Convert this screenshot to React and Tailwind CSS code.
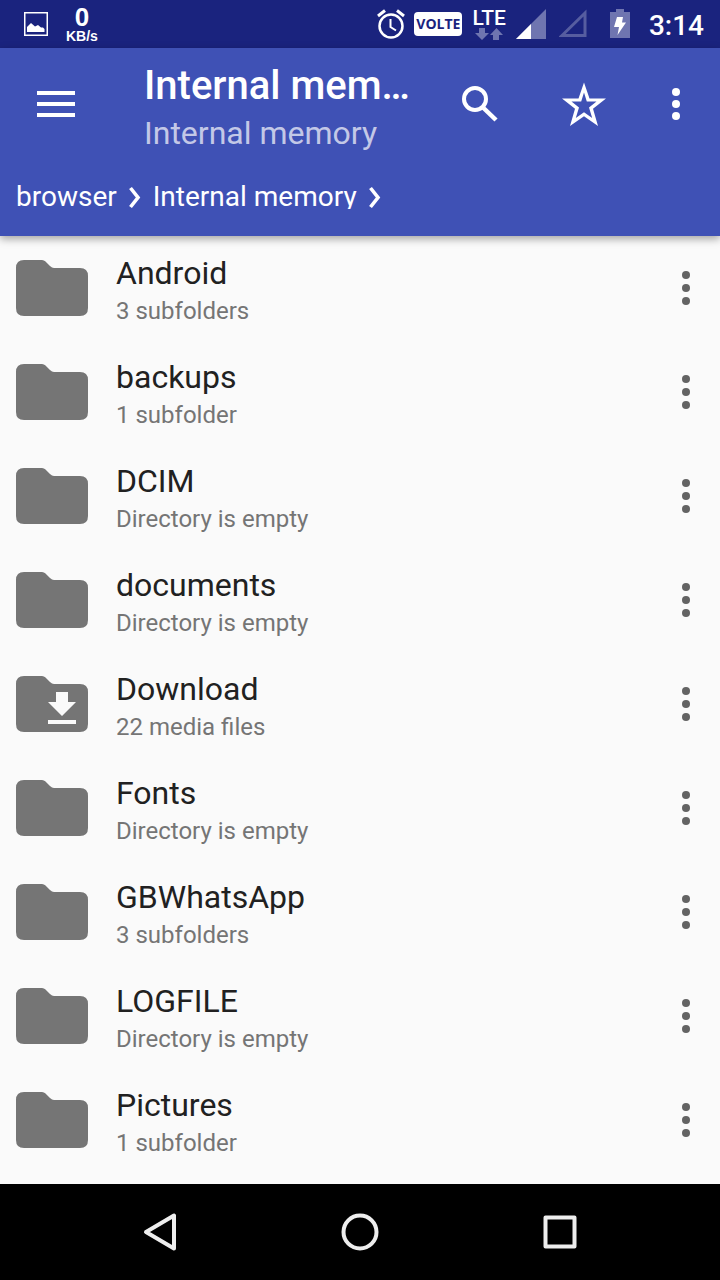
import React from 'react';

const folders = [
  { name: 'Android', info: '3 subfolders' },
  { name: 'backups', info: '1 subfolder' },
  { name: 'DCIM', info: 'Directory is empty' },
  { name: 'documents', info: 'Directory is empty' },
  { name: 'Download', info: '22 media files', download: true },
  { name: 'Fonts', info: 'Directory is empty' },
  { name: 'GBWhatsApp', info: '3 subfolders' },
  { name: 'LOGFILE', info: 'Directory is empty' },
  { name: 'Pictures', info: '1 subfolder' },
];

const MoreIcon = () => (
  <svg className="w-3 h-9" viewBox="0 0 12 36" fill="currentColor">
    <circle cx="6" cy="5" r="4" />
    <circle cx="6" cy="18" r="4" />
    <circle cx="6" cy="31" r="4" />
  </svg>
);

const FolderIcon = ({ download }) => (
  <svg className="w-[72px] h-14 shrink-0" viewBox="0 0 72 56">
    <path
      fill="#757575"
      d="M8 0H26Q28 0 29.5 1.5L34 6Q36 8 38 8H64Q72 8 72 16V48Q72 56 64 56H8Q0 56 0 48V8Q0 0 8 0Z"
    />
    {download && <path fill="#fafafa" d="M40 16H52V26H60L46 40L32 26H40ZM32 44H60V48H32Z" />}
  </svg>
);

const ChevronIcon = () => (
  <svg className="w-3 h-6" viewBox="0 0 12 24" fill="none" stroke="white" strokeWidth="3.6">
    <path d="M1.500 3L9 12.500L1.500 22" />
  </svg>
);

const StatusBar = () => (
  <div className="flex items-center h-12 pl-6 pr-4 bg-[#1a237e] text-white">
    <svg className="w-6 h-6" viewBox="0 0 24 24">
      <rect x="0.75" y="0.75" width="22.5" height="22.5" fill="none" stroke="white" strokeWidth="1.5" />
      <path fill="white" d="M3 20V15L7 11L11 14.500L14 13L17 15.500H19L20.500 17V20Z" />
    </svg>
    <div className="flex flex-col items-center ml-[18px] font-['Liberation_Sans',sans-serif] font-bold">
      <span className="text-[26px] leading-6">0</span>
      <span className="text-[14px] leading-[14px]">KB/s</span>
    </div>

    <svg className="w-7 h-8 ml-auto" viewBox="0 0 28 32" fill="none" stroke="white">
      <circle cx="14" cy="18" r="11.5" strokeWidth="2.5" />
      <path strokeWidth="2" d="M13.500 11V19L19 22.500" />
      <path strokeWidth="3" d="M1 8L8 2.500M20 2.500L27 8" />
    </svg>
    <span className="flex items-center justify-center w-12 h-6 ml-[9px] rounded-sm bg-white text-[#1a237e] font-['Open_Sans',sans-serif] font-bold text-[14px] leading-6">
      VOLTE
    </span>
    <div className="flex flex-col items-center ml-[10px]">
      <span className="text-[21px] leading-5 font-medium">LTE</span>
      <svg className="w-7 h-3" viewBox="0 0 28 12" fill="#6f75b0">
        <path d="M4 0H10V5H14L7 12L0 5H4Z" />
        <path d="M18 12V7H15L21.500 0L28 7H24V12Z" />
      </svg>
    </div>
    <svg className="w-[30px] h-[30px] ml-[10px]" viewBox="0 0 30 30">
      <path fill="#6f75b0" d="M0 30L30 0V30Z" />
      <path fill="white" d="M0 30L15 15V30Z" />
    </svg>
    <svg className="w-[30px] h-[30px] ml-[13px]" viewBox="0 0 30 30">
      <path fill="none" stroke="#565da0" strokeWidth="3" d="M3 26.500L26 4V26.500Z" />
    </svg>
    <svg className="w-5 h-[30px] ml-[21px]" viewBox="0 0 20 30">
      <path fill="#6f75b0" d="M6 0H14V3H20V29H0V3H6Z" />
      <path fill="white" d="M7 8H13L12 13.500H16L7.500 26L9 18H4Z" />
    </svg>
    <span className="ml-[19px] text-[28px] leading-8 pt-1 font-medium">3:14</span>
  </div>
);

const Toolbar = () => (
  <div className="flex items-center h-28 pr-1">
    <button type="button" aria-label="Menu" className="flex items-center justify-center w-28 h-24 shrink-0">
      <svg className="w-[38px] h-7" viewBox="0 0 38 28" fill="white">
        <path d="M0 1H38V5H0ZM0 12H38V16H0ZM0 23H38V27H0Z" />
      </svg>
    </button>
    <div className="flex-1 min-w-0 pl-8 pr-3 pt-2">
      <h1 className="text-[40px] leading-[50px] font-medium truncate">Internal memory</h1>
      <p className="text-[32px] leading-[44px] text-white/70 truncate">Internal memory</p>
    </div>
    <button type="button" aria-label="Search" className="flex items-center justify-center w-[104px] h-24 shrink-0">
      <svg className="w-9 h-9" viewBox="0 0 36 36" fill="none" stroke="white">
        <circle cx="13" cy="13" r="11" strokeWidth="4" />
        <path strokeWidth="4.500" d="M21.500 22L34 34" />
      </svg>
    </button>
    <button type="button" aria-label="Favorite" className="flex items-center justify-center w-[104px] h-24 shrink-0">
      <svg className="w-11 h-11" viewBox="0 0 44 44" fill="white" fillRule="evenodd">
        <path d="M22 0.500L27.500 16.500H44L31 26.800L36 44L22 34.200L8 44L13 26.800L0 16.500H16.500ZM22 10.500L19.200 19.600H9.500L17 25.500L13.800 36L22 30.300L30.200 36L27 25.500L34.500 19.600H24.800Z" />
      </svg>
    </button>
    <button type="button" aria-label="More options" className="flex items-center justify-center w-20 h-24 shrink-0">
      <svg className="w-3 h-9" viewBox="0 0 12 36" fill="white">
        <circle cx="6" cy="6" r="4" />
        <circle cx="6" cy="18" r="4" />
        <circle cx="6" cy="30" r="4" />
      </svg>
    </button>
  </div>
);

const Breadcrumbs = () => (
  <nav className="flex items-center gap-3 h-[76px] px-4 pb-[2px] text-[28px]">
    <a href="#browser" className="h-6 leading-6 overflow-hidden">browser</a>
    <ChevronIcon />
    <a href="#internal" className="h-6 leading-6 overflow-hidden">Internal memory</a>
    <ChevronIcon />
  </nav>
);

const FolderRow = ({ folder }) => (
  <li className="flex items-center h-[104px] pl-4">
    <FolderIcon download={folder.download} />
    <div className="flex-1 min-w-0 pl-7 pt-[6px]">
      <div className="text-[32px] leading-10 text-[#212121] truncate">{folder.name}</div>
      <div className="text-[24px] leading-9 text-[#757575] truncate">{folder.info}</div>
    </div>
    <button
      type="button"
      aria-label={`Options for ${folder.name}`}
      className="flex items-center justify-center w-[68px] h-20 shrink-0 text-[#636363]"
    >
      <MoreIcon />
    </button>
  </li>
);

const NavigationBar = () => (
  <div className="flex items-center justify-center gap-[104px] h-24 mt-auto bg-black">
    <button type="button" aria-label="Back" className="flex items-center justify-center w-24 h-24">
      <svg className="w-10 h-10" viewBox="0 0 40 40" fill="none" stroke="#eeeeee" strokeWidth="4" strokeLinejoin="round">
        <path d="M34 3.500V36.500L6 20Z" />
      </svg>
    </button>
    <button type="button" aria-label="Home" className="flex items-center justify-center w-24 h-24">
      <svg className="w-10 h-10" viewBox="0 0 40 40" fill="none" stroke="#eeeeee" strokeWidth="4">
        <circle cx="20" cy="20" r="16.5" />
      </svg>
    </button>
    <button type="button" aria-label="Recent apps" className="flex items-center justify-center w-24 h-24">
      <svg className="w-10 h-10" viewBox="0 0 40 40" fill="none" stroke="#eeeeee" strokeWidth="4" strokeLinejoin="round">
        <rect x="5.500" y="5.500" width="29" height="29" />
      </svg>
    </button>
  </div>
);

const App = () => {
  return (
    <div className="flex flex-col min-h-screen bg-[#fafafa] font-[Roboto,sans-serif]">
      <StatusBar />
      <header className="bg-[#3f51b5] text-white shadow-[0_3px_8px_rgba(0,0,0,0.35)]">
        <Toolbar />
        <Breadcrumbs />
      </header>
      <main>
        <ul>
          {folders.map((folder) => (
            <FolderRow key={folder.name} folder={folder} />
          ))}
        </ul>
      </main>
      <NavigationBar />
    </div>
  );
};

export default App;
